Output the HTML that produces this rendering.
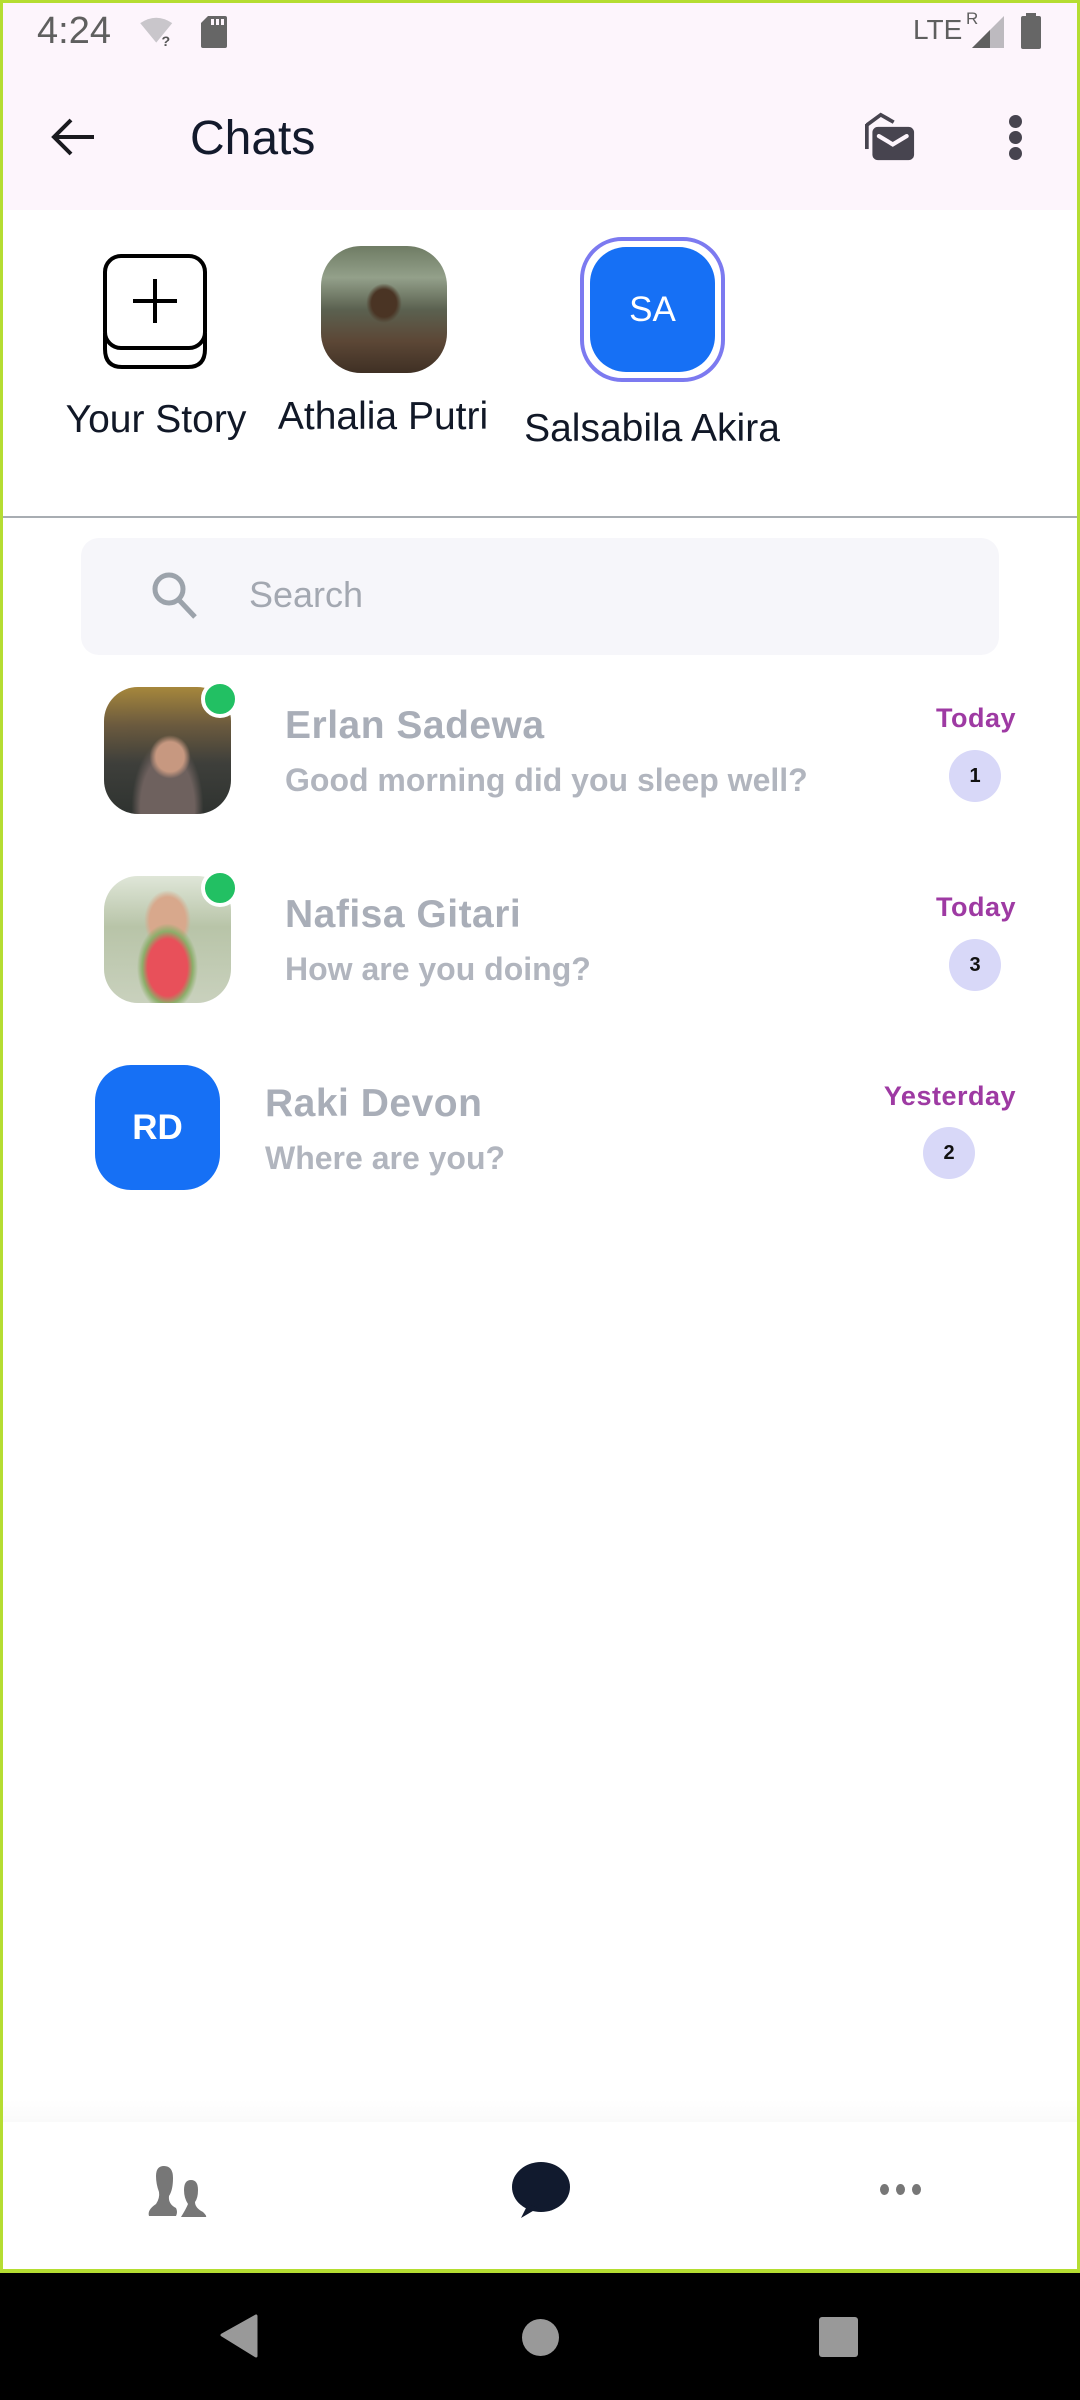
<!DOCTYPE html>
<html><head><meta charset="utf-8"><style>
*{margin:0;padding:0;box-sizing:border-box}
body{width:1080px;height:2400px;position:relative;background:#fff;font-family:"Liberation Sans",sans-serif;overflow:hidden}
.frame{position:absolute;left:0;top:0;width:1080px;height:2273px;border:3px solid #b5dd32;border-bottom:4px solid #b5dd32}
.abs{position:absolute}
.appbar{position:absolute;left:3px;top:3px;width:1074px;height:207px;background:#fdf5fc}
.lbl{position:absolute;font-size:39px;color:#111827;white-space:nowrap;transform:translateX(-50%)}
.name{position:absolute;font-size:39px;font-weight:bold;color:#a9aeb8;white-space:nowrap;letter-spacing:0.5px}
.msg{position:absolute;font-size:32px;color:#a9aeb8;white-space:nowrap;font-weight:bold;opacity:.9}
.date{position:absolute;font-size:27px;font-weight:bold;color:#9e3aa3;right:64px;white-space:nowrap;letter-spacing:0.5px}
.badge{position:absolute;width:52px;height:52px;border-radius:50%;background:#d8d8f8;color:#111;font-size:20px;font-weight:bold;text-align:center;line-height:52px}
.av{position:absolute;border-radius:34px;overflow:hidden}
.dot{position:absolute;width:38px;height:38px;border-radius:50%;background:#22c063;border:4px solid #fff}
</style></head><body>
<div class="appbar"></div>
<div class="frame"></div>
<!-- status bar -->
<div class="abs" style="left:37px;top:10px;font-size:38px;color:#5f5f5f">4:24</div>
<svg class="abs" style="left:138px;top:16px" width="40" height="32" viewBox="0 0 44 36"><path d="M2 8 Q20 -4 38 8 L20 30 Z" fill="#c9c6cb"/><text x="26" y="34" font-size="16" font-family="Liberation Sans" font-weight="bold" fill="#555">?</text></svg>
<svg class="abs" style="left:200px;top:15px" width="28" height="34" viewBox="0 0 28 34"><path d="M8 1 H25 Q27 1 27 3 V31 Q27 33 25 33 H3 Q1 33 1 31 V8 Z" fill="#666"/><rect x="11" y="4" width="3" height="6" fill="#fdf5fc"/><rect x="16" y="4" width="3" height="6" fill="#fdf5fc"/><rect x="21" y="4" width="3" height="6" fill="#fdf5fc"/></svg>
<div class="abs" style="left:913px;top:14px;font-size:28px;color:#5f5f5f">LTE</div>
<div class="abs" style="left:966px;top:9px;font-size:17px;color:#5f5f5f">R</div>
<svg class="abs" style="left:970px;top:14px" width="34" height="34"><path d="M34 2 V34 H2 Z" fill="#bdbabf"/><path d="M20 16 V34 H2 Z" fill="#5f5f5f"/></svg>
<svg class="abs" style="left:1020px;top:13px" width="22" height="36"><rect x="6" y="0" width="10" height="4" fill="#666"/><rect x="1" y="3" width="20" height="33" rx="2" fill="#666"/></svg>
<!-- app bar -->
<svg class="abs" style="left:50px;top:114px" width="46" height="46" viewBox="0 0 46 46"><path d="M44 23 H4 M21 6 L4 23 L21 40" fill="none" stroke="#1a1a1f" stroke-width="4"/></svg>
<div class="abs" style="left:190px;top:111px;font-size:48px;color:#131a2c">Chats</div>
<svg class="abs" style="left:864px;top:112px" width="52" height="50" viewBox="0 0 56 54"><path d="M3 14 L18 3 L32 11" fill="none" stroke="#47444f" stroke-width="4"/><path d="M3 13 V40" stroke="#47444f" stroke-width="4"/><rect x="9" y="16" width="45" height="36" rx="6" fill="#47444f"/><path d="M16 26 L31 35 L46 26" fill="none" stroke="#fdf5fc" stroke-width="4.5" stroke-linecap="round"/></svg>
<div class="abs" style="left:1009px;top:115px;width:13px;height:13px;border-radius:50%;background:#47444f"></div>
<div class="abs" style="left:1009px;top:131px;width:13px;height:13px;border-radius:50%;background:#47444f"></div>
<div class="abs" style="left:1009px;top:147px;width:13px;height:13px;border-radius:50%;background:#47444f"></div>
<!-- stories -->
<svg class="abs" style="left:102px;top:253px" width="110" height="118" viewBox="0 0 110 118"><rect x="3" y="3" width="100" height="92" rx="16" fill="none" stroke="#000" stroke-width="4"/><path d="M3 80 V96 Q3 114 20 114 H86 Q103 114 103 96 V80" fill="none" stroke="#000" stroke-width="4"/><path d="M53 26 V70 M31 48 H75" stroke="#000" stroke-width="4"/></svg>
<div class="av" style="left:321px;top:246px;width:126px;height:127px;border-radius:40px;background:radial-gradient(ellipse at 50% 45%,#4a3424 0 14%,transparent 20%),linear-gradient(180deg,#6f7c64 0%,#93a08a 25%,#5b6150 50%,#5c4736 75%,#3f3024 100%)"></div>
<div class="av" style="left:580px;top:237px;width:145px;height:145px;border-radius:42px;border:4px solid #7c7af0;background:#fff"></div>
<div class="av" style="left:590px;top:247px;width:125px;height:125px;border-radius:36px;background:#1670f5;color:#fff;font-size:35px;text-align:center;line-height:125px">SA</div>
<div class="lbl" style="left:156px;top:398px">Your Story</div>
<div class="lbl" style="left:383px;top:395px">Athalia Putri</div>
<div class="lbl" style="left:652px;top:407px">Salsabila Akira</div>
<div class="abs" style="left:3px;top:516px;width:1074px;height:2px;background:#a8adb2"></div>
<!-- search -->
<div class="abs" style="left:81px;top:538px;width:918px;height:117px;border-radius:18px;background:#f6f6fa"></div>
<svg class="abs" style="left:150px;top:570px" width="50" height="52" viewBox="0 0 50 52"><circle cx="19" cy="19" r="14" fill="none" stroke="#9ca3ab" stroke-width="5"/><path d="M29 30 L45 47" stroke="#9ca3ab" stroke-width="5"/></svg>
<div class="abs" style="left:249px;top:574px;font-size:36px;color:#a3a8b1">Search</div>
<!-- row 1 -->
<div class="av" style="left:104px;top:687px;width:127px;height:127px;background:radial-gradient(ellipse at 52% 55%,#c79880 0 15%,transparent 22%),radial-gradient(ellipse at 50% 95%,#6e615e 0 30%,transparent 40%),linear-gradient(180deg,#a6873c 0%,#6b5a3e 30%,#3e3f3b 60%,#2f3330 100%)"></div>
<div class="dot" style="left:201px;top:680px"></div>
<div class="name" style="left:285px;top:704px">Erlan Sadewa</div>
<div class="msg" style="left:285px;top:762px">Good morning did you sleep well?</div>
<div class="date" style="top:703px">Today</div>
<div class="badge" style="left:949px;top:750px">1</div>
<!-- row 2 -->
<div class="av" style="left:104px;top:876px;width:127px;height:127px;background:radial-gradient(ellipse at 50% 72%,#e8505a 0 22%,#8cae6a 28%,transparent 34%),radial-gradient(ellipse at 50% 35%,#d8a88c 0 20%,transparent 26%),linear-gradient(180deg,#dfe6d8 0%,#b8c4a8 40%,#c9d1bd 100%)"></div>
<div class="dot" style="left:201px;top:869px"></div>
<div class="name" style="left:285px;top:893px">Nafisa Gitari</div>
<div class="msg" style="left:285px;top:951px">How are you doing?</div>
<div class="date" style="top:892px">Today</div>
<div class="badge" style="left:949px;top:939px">3</div>
<!-- row 3 -->
<div class="av" style="left:95px;top:1065px;width:125px;height:125px;border-radius:36px;background:#1670f5;color:#fff;font-size:35px;text-align:center;line-height:125px;font-weight:bold">RD</div>
<div class="name" style="left:265px;top:1082px">Raki Devon</div>
<div class="msg" style="left:265px;top:1140px">Where are you?</div>
<div class="date" style="top:1081px">Yesterday</div>
<div class="badge" style="left:923px;top:1127px">2</div>
<!-- bottom nav -->
<div class="abs" style="left:3px;top:2100px;width:1074px;height:22px;background:linear-gradient(#fff,#fafafa)"></div>
<svg class="abs" style="left:146px;top:2164px" width="66" height="56" viewBox="0 0 66 56"><path d="M18 2 Q27 2 27 14 Q27 26 23 32 Q22 40 30 44 Q32 48 30 52 H3 Q1 46 10 40 Q14 34 13 28 Q10 20 10 12 Q10 2 18 2 Z" fill="#777"/><path d="M45 16 Q52 16 52 26 Q52 34 49 38 Q49 44 57 48 Q61 52 60 53 H35 Q40 45 42 40 Q38 34 38 26 Q38 16 45 16Z" fill="#777"/></svg>
<svg class="abs" style="left:510px;top:2162px" width="60" height="58" viewBox="0 0 60 58"><ellipse cx="31" cy="25" rx="29" ry="25" fill="#111a2e"/><path d="M18 42 L11 56 L28 46 Z" fill="#111a2e"/></svg>
<div class="abs" style="left:880px;top:2184px;width:9px;height:11px;border-radius:50%;background:#777"></div>
<div class="abs" style="left:896px;top:2184px;width:9px;height:11px;border-radius:50%;background:#777"></div>
<div class="abs" style="left:912px;top:2184px;width:9px;height:11px;border-radius:50%;background:#777"></div>
<!-- system nav -->
<div class="abs" style="left:0;top:2273px;width:1080px;height:127px;background:#000"></div>
<svg class="abs" style="left:218px;top:2314px" width="40" height="44"><path d="M38 2 V42 L4 21 Z" fill="#999" stroke="#999" stroke-width="3" stroke-linejoin="round"/></svg>
<div class="abs" style="left:522px;top:2319px;width:37px;height:37px;border-radius:50%;background:#999"></div>
<div class="abs" style="left:819px;top:2317px;width:39px;height:40px;border-radius:3px;background:#999"></div>
</body></html>
